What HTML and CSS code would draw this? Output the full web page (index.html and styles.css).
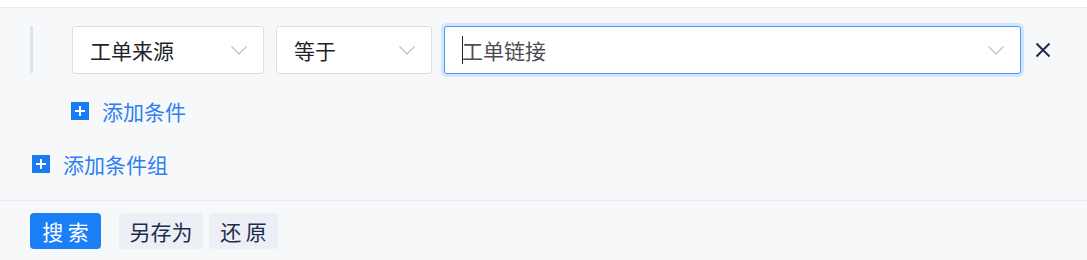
FILE: index.html
```html
<!DOCTYPE html>
<html lang="zh">
<head>
<meta charset="utf-8">
<link rel="stylesheet" href="styles.css">
</head>
<body>
<div class="top"></div>
<div class="panel">
  <div class="group">
    <div class="bar"></div>
    <div class="conds">
      <div class="row">
        <div class="select s1"><span class="val">工单来源</span><svg class="chev" viewBox="0 0 16 9"><path d="M0.5 0.5 L8 8 L15.5 0.5"/></svg></div>
        <div class="select s2"><span class="val">等于</span><svg class="chev" viewBox="0 0 16 9"><path d="M0.5 0.5 L8 8 L15.5 0.5"/></svg></div>
        <div class="select s3 focus"><span class="caret"></span><span class="val muted">工单链接</span><svg class="chev" viewBox="0 0 16 9"><path d="M0.5 0.5 L8 8 L15.5 0.5"/></svg></div>
        <svg class="close" viewBox="0 0 16 16"><path d="M1.5 1.5 L14.5 14.5 M14.5 1.5 L1.5 14.5"/></svg>
      </div>
      <div class="add add-cond"><span class="plus"></span><span class="link">添加条件</span></div>
    </div>
  </div>
  <div class="add add-group"><span class="plus"></span><span class="link">添加条件组</span></div>
</div>
<div class="footer">
  <button class="btn primary">搜 索</button>
  <button class="btn gray save">另存为</button>
  <button class="btn gray reset">还 原</button>
</div>
</body>
</html>
```
FILE: styles.css
```css
* { box-sizing: border-box; }
html, body { margin: 0; padding: 0; }
body {
  width: 1087px;
  height: 260px;
  overflow: hidden;
  background: #f7f8fa;
  font-family: "Noto Sans CJK SC", "Noto Sans", sans-serif;
  font-size: 21px;
  color: #1f2329;
}
.top {
  height: 8px;
  background: #ffffff;
  border-bottom: 1px solid #e8eaef;
}
.panel {
  padding: 18px 0 0 30px;
  height: 193px;
  border-bottom: 1px solid #e8eaef;
}
.group {
  display: flex;
  align-items: flex-start;
}
.bar {
  width: 3px;
  height: 47px;
  background: #dde3ee;
  margin-right: 39px;
}
.row {
  display: flex;
  align-items: center;
}
.select {
  height: 48px;
  background: #fff;
  border: 1px solid #dcdfe6;
  border-radius: 3px;
  display: flex;
  align-items: center;
  padding: 0 16px 0 17px;
  position: relative;
}
.val { flex: 1; line-height: 1; white-space: nowrap; }
.muted { color: #4a4d55; }
.chev {
  width: 16px;
  height: 9px;
  fill: none;
  stroke: #c0c4cc;
  stroke-width: 1.3;
}
.s1 { width: 192px; margin-right: 12px; }
.s2 { width: 156px; margin-right: 12px; }
.s3 { width: 577px; margin-right: 14px; }
.focus {
  border-color: #4a9bf5;
  box-shadow: 0 0 0 3px #d3e5fc;
}
.caret {
  width: 1px;
  height: 28px;
  background: #222;
  position: absolute;
  left: 17px;
  top: 9px;
}
.close {
  width: 16px;
  height: 16px;
  fill: none;
  stroke: #1f2d4d;
  stroke-width: 2;
}
.add {
  display: flex;
  align-items: center;
  height: 32px;
}
.add-cond { margin-top: 21px; margin-left: -1px; }
.add-group { margin-top: 21px; margin-left: 2px; }
.plus {
  width: 18px;
  height: 18px;
  background: #1a7cf5;
  position: relative;
  margin-right: 13px;
}
.plus::before, .plus::after {
  content: "";
  position: absolute;
  background: #fff;
}
.plus::before { left: 4px; top: 8px; width: 10px; height: 2px; }
.plus::after { left: 8px; top: 4px; width: 2px; height: 10px; }
.link { color: #2f7ff2; line-height: 1; }
.footer {
  display: flex;
  align-items: center;
  padding: 12px 0 0 30px;
}
.btn {
  height: 36px;
  border: none;
  border-radius: 4px;
  font-family: inherit;
  font-size: 21px;
  padding: 0;
  line-height: 1;
  white-space: nowrap;
  text-align: center;
  margin-right: 6px;
}
.primary {
  background: #1a7ff7;
  color: #fff;
  margin-right: 18px;
  width: 71px;
}
.gray {
  background: #eceff5;
  color: #1f2d4d;
}
.save { width: 84px; }
.reset { width: 69px; }
```
